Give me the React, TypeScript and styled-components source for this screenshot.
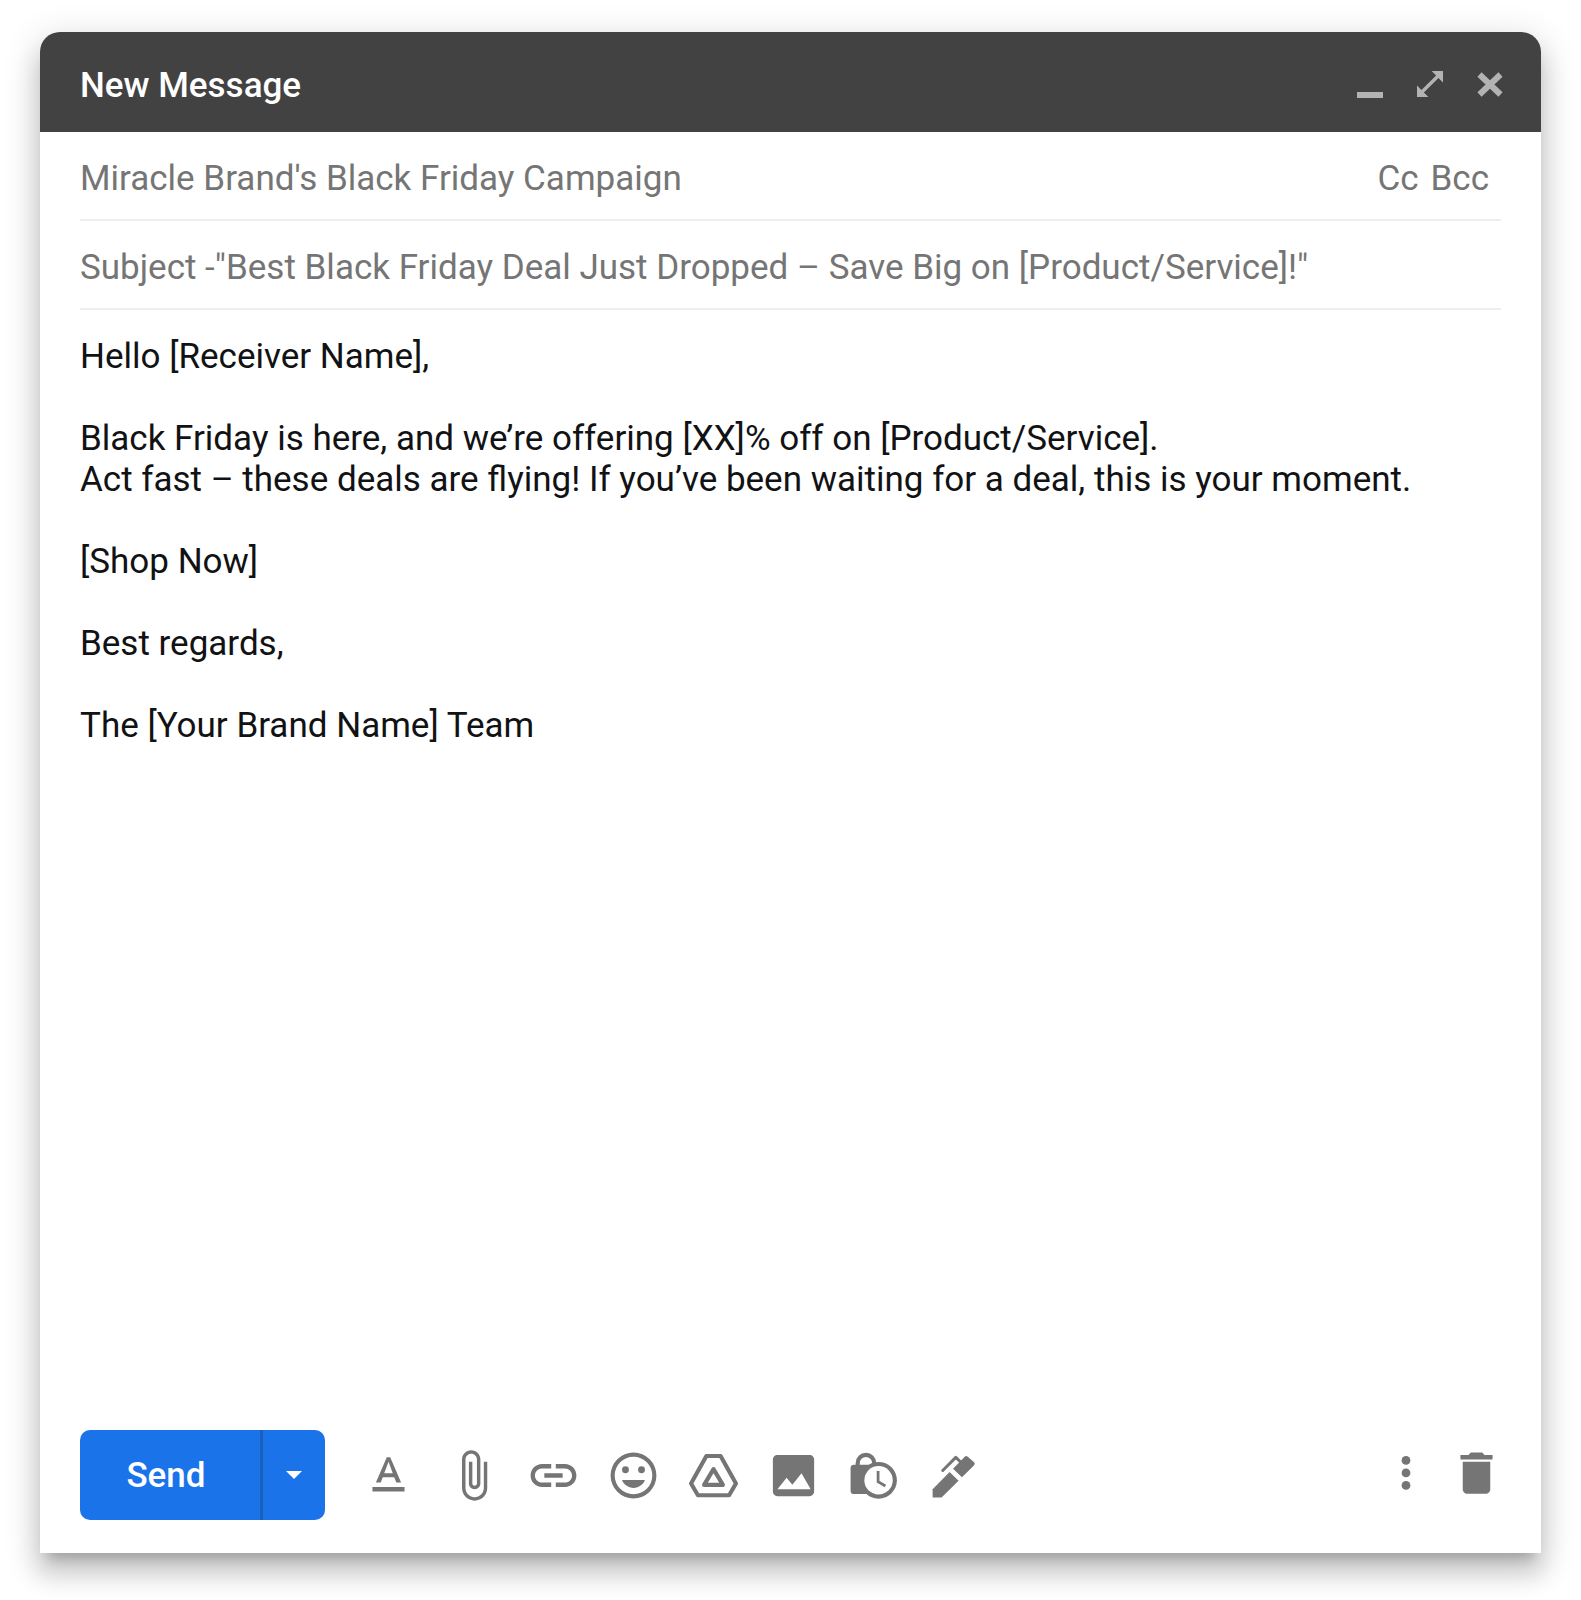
import React from "react";
import styled, { createGlobalStyle } from "styled-components";

const GlobalStyle = createGlobalStyle`
  *, *::before, *::after {
    box-sizing: border-box;
  }

  body {
    margin: 0;
    background: #ffffff;
    font-family: Roboto, "Liberation Sans", sans-serif;
  }

  button, input, textarea {
    margin: 0;
    padding: 0;
    border: 0;
    background: none;
    font: inherit;
    color: inherit;
  }

  button {
    cursor: pointer;
  }
`;

const Page = styled.main`
  display: flex;
  min-height: 100vh;
  padding: 32px 40px 47px;
`;

const Window = styled.form`
  display: flex;
  flex: 1;
  flex-direction: column;
  min-width: 0;
  border-radius: 20px 20px 0 0;
  background: #ffffff;
  font-size: 35px;
  line-height: 41px;
  box-shadow:
    0 20px 25px 3px rgba(0, 0, 0, 0.14),
    0 8px 35px 5px rgba(0, 0, 0, 0.12),
    0 13px 13px -8px rgba(0, 0, 0, 0.2);
`;

const TitleBar = styled.header`
  display: flex;
  align-items: center;
  justify-content: space-between;
  height: 100px;
  padding: 6px 37px 0 40px;
  border-radius: 20px 20px 0 0;
  background: #424242;
  color: #ffffff;
`;

const Title = styled.h1`
  margin: 0;
  font-size: 35px;
  font-weight: 500;
  line-height: 41px;
`;

const WindowControls = styled.div`
  display: flex;
  gap: 32px;
  color: #b3b3b3;
`;

const IconButton = styled.button<{ $size: number }>`
  display: flex;
  flex: none;
  width: ${(p) => p.$size}px;
  height: ${(p) => p.$size}px;

  svg {
    width: 100%;
    height: 100%;
    fill: currentColor;
  }
`;

const Fields = styled.div`
  padding: 0 40px;
  color: #757575;
`;

const FieldRow = styled.div`
  display: flex;
  align-items: center;
  gap: 12px;
  height: 89px;
  padding: 5px 12px 0 0;
  border-bottom: 2px solid #eeeeee;
`;

const FieldInput = styled.input`
  flex: 1;
  min-width: 0;
  height: 48px;
  outline: none;
`;

const CopyButton = styled.button`
  flex: none;
`;

const Body = styled.textarea`
  display: block;
  flex: 1;
  min-height: 440px;
  padding: 26px 40px;
  outline: none;
  resize: none;
  color: #111214;
`;

const Toolbar = styled.footer`
  display: flex;
  align-items: center;
  justify-content: space-between;
  padding: 0 37px 33px 40px;
  color: #757575;
`;

const ToolGroup = styled.div<{ $gap: number }>`
  display: flex;
  align-items: center;
  gap: ${(p) => p.$gap}px;
`;

const SendGroup = styled.div`
  display: flex;
  height: 90px;
  margin-right: 6px;
  overflow: hidden;
  border-radius: 10px;
  background: #1a73e8;
  color: #ffffff;
`;

const SendButton = styled.button`
  width: 183px;
  padding-right: 8px;
  border-right: 3px solid #1b5fbf;
  font-weight: 500;
`;

const SendOptions = styled.button`
  display: flex;
  align-items: center;
  justify-content: center;
  width: 62px;

  svg {
    width: 16px;
    height: 8px;
    fill: currentColor;
  }
`;

const message = `Hello [Receiver Name],

Black Friday is here, and we’re offering [XX]% off on [Product/Service].
Act fast – these deals are flying! If you’ve been waiting for a deal, this is your moment.

[Shop Now]

Best regards,

The [Your Brand Name] Team`;

type ToolProps = {
  label: string;
  size?: number;
  viewBox?: string;
  children: React.ReactNode;
};

function Tool({ label, size = 55, viewBox = "0 0 24 24", children }: ToolProps) {
  return (
    <IconButton type="button" aria-label={label} $size={size}>
      <svg viewBox={viewBox} aria-hidden="true">
        {children}
      </svg>
    </IconButton>
  );
}

export default function App() {
  return (
    <>
      <GlobalStyle />
      <Page>
        <Window onSubmit={(e) => e.preventDefault()}>
          <TitleBar>
            <Title>New Message</Title>
            <WindowControls>
              <Tool label="Minimize" size={28} viewBox="0 0 28 28">
                <path d="M1 21h26v6H1z" />
              </Tool>
              <Tool label="Full screen" size={28} viewBox="0 0 28 28">
                <path d="M15.6 0H27v11.4l-4.5-4.5L7.900 21.500l4.500 4.500H1V14.600l4.500 4.500L20.100 4.500z" />
              </Tool>
              <Tool label="Close" size={28} viewBox="0 0 28 28">
                <path
                  d="M3.5 3.5 24.500 23.500M24.500 3.500 3.500 23.500"
                  fill="none"
                  stroke="currentColor"
                  strokeWidth="6"
                />
              </Tool>
            </WindowControls>
          </TitleBar>

          <Fields>
            <FieldRow>
              <FieldInput
                aria-label="Recipients"
                defaultValue="Miracle Brand's Black Friday Campaign"
              />
              <CopyButton type="button">Cc</CopyButton>
              <CopyButton type="button">Bcc</CopyButton>
            </FieldRow>
            <FieldRow>
              <FieldInput
                aria-label="Subject"
                defaultValue={
                  'Subject -"Best Black Friday Deal Just Dropped – Save Big on [Product/Service]!"'
                }
              />
            </FieldRow>
          </Fields>

          <Body aria-label="Message body" spellCheck={false} defaultValue={message} />

          <Toolbar>
            <ToolGroup $gap={30}>
              <SendGroup>
                <SendButton type="submit">Send</SendButton>
                <SendOptions type="button" aria-label="More send options">
                  <svg viewBox="0 0 16 8" aria-hidden="true">
                    <path d="M0 0h16L8 8z" />
                  </svg>
                </SendOptions>
              </SendGroup>
              <Tool label="Formatting options">
                <path d="M5 17v2h14v-2H5zm4.5-4.2h5l.9 2.2h2.1L12.75 4h-1.5L6.5 15h2.1l.9-2.2zM12 5.98L13.87 11h-3.74L12 5.98z" />
              </Tool>
              <ToolGroup $gap={25}>
                <Tool label="Attach files">
                  <path d="M16.5 6v11.5c0 2.21-1.79 4-4 4s-4-1.79-4-4V5c0-1.38 1.12-2.5 2.5-2.5s2.5 1.12 2.5 2.5v10.5c0 .55-.45 1-1 1s-1-.45-1-1V6H10v9.5c0 1.38 1.12 2.5 2.5 2.5s2.5-1.12 2.5-2.5V5c0-2.21-1.79-4-4-4S7 2.79 7 5v12.5c0 3.04 2.46 5.5 5.5 5.5s5.5-2.46 5.5-5.5V6h-1.5z" />
                </Tool>
                <Tool label="Insert link">
                  <path d="M3.9 12c0-1.71 1.39-3.1 3.1-3.1h4V7H7c-2.76 0-5 2.24-5 5s2.24 5 5 5h4v-1.9H7c-1.71 0-3.1-1.39-3.1-3.1zM8 13h8v-2H8v2zm9-6h-4v1.9h4c1.71 0 3.1 1.39 3.1 3.1s-1.39 3.1-3.1 3.1h-4V17h4c2.76 0 5-2.24 5-5s-2.24-5-5-5z" />
                </Tool>
                <Tool label="Insert emoji">
                  <path d="M12 2a10 10 0 1 0 0 20 10 10 0 0 0 0-20zm0 18.2a8.2 8.2 0 1 1 0-16.4 8.2 8.2 0 0 1 0 16.4z" />
                  <circle cx="8.5" cy="9.5" r="1.5" />
                  <circle cx="15.5" cy="9.5" r="1.5" />
                  <path d="M7 14h10c-.7 2-2.7 3.4-5 3.4S7.7 16 7 14z" />
                </Tool>
                <Tool label="Insert from Drive">
                  <g
                    fill="none"
                    stroke="currentColor"
                    strokeWidth="1.8"
                    strokeLinejoin="round"
                  >
                    <path d="M8.9 3.5h6.2L21.8 15.5l-3 5.1H5.2l-3-5.1z" />
                    <path d="M12 9.2 16.1 16.1H7.9z" />
                  </g>
                </Tool>
                <Tool label="Insert photo">
                  <path d="M21 19V5c0-1.1-.9-2-2-2H5c-1.1 0-2 .9-2 2v14c0 1.1.9 2 2 2h14c1.1 0 2-.9 2-2zM5 18l4-5 2.5 3 4-5L19.5 18H5z" />
                </Tool>
                <Tool label="Toggle confidential mode">
                  <path
                    d="M5.1 8V6.6a3.6 3.6 0 0 1 7.2 0V8"
                    fill="none"
                    stroke="currentColor"
                    strokeWidth="1.8"
                  />
                  <rect x="2" y="7.3" width="12" height="12.8" rx="1.5" />
                  <circle cx="14.2" cy="14.1" r="8" />
                  <circle cx="14.2" cy="14.1" r="6.2" fill="#ffffff" />
                  <path
                    d="M14 10v4.7l3.2 1.9"
                    fill="none"
                    stroke="currentColor"
                    strokeWidth="1.2"
                  />
                </Tool>
                <Tool label="Insert signature">
                  <path d="M2.9 21.6V18l7.4-7.5 3.9 3.8-7.4 7.3z" />
                  <path d="M11.8 9.1 16.9 3.800q.6-.7 1.300 0l2.800 2.400q.6.700 0 1.300l-5.300 5.300z" />
                  <path
                    d="M7.3 9.8 13 4.100l2.100 2"
                    fill="none"
                    stroke="currentColor"
                    strokeWidth="1.3"
                    strokeLinecap="round"
                    strokeLinejoin="round"
                  />
                </Tool>
              </ToolGroup>
            </ToolGroup>
            <ToolGroup $gap={18}>
              <Tool label="More options" size={50} viewBox="0 1 24 24">
                <circle cx="12" cy="6" r="2.1" />
                <circle cx="12" cy="12" r="2.1" />
                <circle cx="12" cy="18" r="2.1" />
              </Tool>
              <Tool label="Discard draft" viewBox="0 1 24 24">
                <path d="M6 19c0 1.1.9 2 2 2h8c1.1 0 2-.9 2-2V7H6v12zM19 4h-3.5l-1-1h-5l-1 1H5v2h14V4z" />
              </Tool>
            </ToolGroup>
          </Toolbar>
        </Window>
      </Page>
    </>
  );
}
